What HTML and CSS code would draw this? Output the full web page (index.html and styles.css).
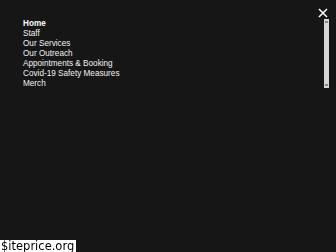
FILE: index.html
```html
<!DOCTYPE html>
<html lang="en">
<head>
  <meta charset="UTF-8" />
  <title>Menu</title>
  <link rel="stylesheet" href="styles.css">
</head>
<body>
  <div class="overlay">
    <div class="top">
      <button class="close-btn" aria-label="Close">
        <svg width="10" height="10" viewBox="0 0 10 10">
          <path d="M1 1 L9 9 M9 1 L1 9" stroke="#fff" stroke-width="1.5" fill="none"/>
        </svg>
      </button>
    </div>
    <div class="menu-wrap">
      <ul class="menu">
        <li class="active">Home</li>
        <li>Staff</li>
        <li>Our Services</li>
        <li>Our Outreach</li>
        <li>Appointments &amp; Booking</li>
        <li>Covid-19 Safety Measures</li>
        <li>Merch</li>
      </ul>
      <div class="scrollbar">
        <span class="arrow"></span>
        <span class="arrow"></span>
      </div>
    </div>
  </div>
  <div class="stamp">$iteprice.org</div>
</body>
</html>
```

FILE: styles.css
```css
html, body {
  height: 100%;
}

body {
  margin: 0;
  background: #161616;
  font-family: "Liberation Sans", Arial, sans-serif;
  color: #f2f2f2;
}

.overlay {
  padding: 7px 7px 0 23px;
}

.top {
  display: flex;
  justify-content: flex-end;
  height: 12px;
}

.close-btn {
  background: none;
  border: none;
  padding: 0;
  margin-right: 1px;
  margin-top: 1px;
  width: 10px;
  height: 10px;
  cursor: pointer;
}

.close-btn svg {
  display: block;
}

.menu-wrap {
  display: flex;
  justify-content: space-between;
}

.menu {
  list-style: none;
  margin: 0;
  padding: 0;
  font-size: 8.2px;
  line-height: 10px;
}

.menu li {
  cursor: pointer;
}

.menu li.active {
  font-weight: bold;
  color: #fff;
}

.scrollbar {
  width: 5px;
  height: 69px;
  background: #d6d6d6;
  display: flex;
  flex-direction: column;
  justify-content: space-between;
  align-items: center;
  padding: 2px 0;
  box-sizing: border-box;
}

.arrow {
  width: 3px;
  height: 2px;
  background: #888;
}

.stamp {
  position: fixed;
  left: 0;
  bottom: 0;
  background: #fff;
  color: #000;
  font-family: "DejaVu Sans", sans-serif;
  font-size: 11.5px;
  line-height: 12px;
  padding: 0 2px 0 1px;
}
```
